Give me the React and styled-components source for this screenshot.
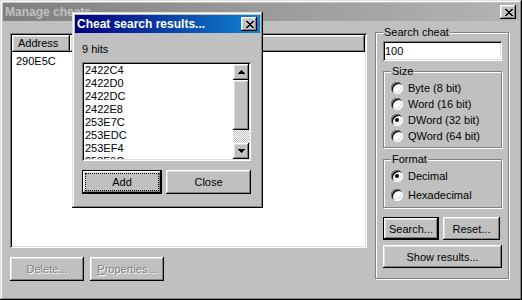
import React from 'react'
import styled, { createGlobalStyle, css } from 'styled-components'

const GlobalStyle = createGlobalStyle`
  body {
    margin: 0;
    background: #c0c0c0;
    font-family: 'Liberation Sans', Arial, sans-serif;
    font-size: 11px;
    color: #000;
  }
`

const raised = css`
  box-shadow: inset -1px -1px #000, inset 1px 1px #fff, inset -2px -2px #808080,
    inset 2px 2px #dfdfdf;
`

const sunken = css`
  box-shadow: inset 1px 1px #808080, inset -1px -1px #fff, inset 2px 2px #000,
    inset -2px -2px #dfdfdf;
`

const Window = styled.div`
  position: relative;
  box-sizing: border-box;
  width: ${(p) => p.$w}px;
  height: ${(p) => p.$h}px;
  padding: 3px;
  background: #c0c0c0;
  display: flex;
  flex-direction: column;
  box-shadow: inset -1px -1px #000, inset 1px 1px #dfdfdf, inset -2px -2px #808080,
    inset 2px 2px #fff;
`

const Dialog = styled(Window)`
  position: absolute;
  left: 72px;
  top: 12px;
`

const TitleBar = styled.div`
  flex: none;
  height: 18px;
  display: flex;
  align-items: center;
  padding-left: 2px;
  font-size: 12px;
  font-weight: bold;
  background: ${(p) =>
    p.$active
      ? 'linear-gradient(90deg, #000080, #1084d0)'
      : 'linear-gradient(90deg, #808080, #b4b4b4)'};
  color: ${(p) => (p.$active ? '#fff' : '#c0c0c0')};
`

const TitleText = styled.span`
  flex: 1;
  white-space: nowrap;
  overflow: hidden;
`

const CloseButton = styled.button`
  width: 16px;
  height: 14px;
  margin-right: 3px;
  padding: 0 0 0 1px;
  border: none;
  background: #c0c0c0;
  display: grid;
  place-items: center;
  ${raised}
`

const Body = styled.div`
  flex: 1;
  display: grid;
  grid-template-columns: 357px 134px;
  column-gap: 8px;
  align-items: start;
  padding: 5px 0 0 7px;
`

const LeftColumn = styled.div`
  display: flex;
  flex-direction: column;
  padding-top: 7px;
`

const ListView = styled.div`
  box-sizing: border-box;
  height: 215px;
  padding: 2px;
  background: #fff;
  display: flex;
  flex-direction: column;
  ${sunken}
`

const Header = styled.div`
  display: flex;
  height: 17px;
`

const HeaderCell = styled.div`
  box-sizing: border-box;
  width: ${(p) => (p.$w ? `${p.$w}px` : 'auto')};
  flex: ${(p) => (p.$w ? 'none' : '1')};
  padding-left: 6px;
  line-height: 17px;
  background: #c0c0c0;
  ${raised}
`

const ListRow = styled.div`
  padding: 3px 0 0 4px;
  line-height: 13px;
`

const ButtonRow = styled.div`
  display: flex;
  gap: ${(p) => p.$gap}px;
  margin-top: ${(p) => p.$mt}px;
`

const Button = styled.button`
  box-sizing: border-box;
  width: ${(p) => p.$w}px;
  height: ${(p) => p.$h || 23}px;
  padding: 0;
  border: none;
  background: #c0c0c0;
  font-family: 'Liberation Sans', Arial, sans-serif;
  font-size: 11px;
  color: #000;
  ${raised}
  ${(p) =>
    p.$default &&
    css`
      box-shadow: inset 0 0 0 1px #000, inset -2px -2px #000, inset 2px 2px #fff,
        inset -3px -3px #808080, inset 3px 3px #dfdfdf;
    `}
  ${(p) =>
    p.$focused &&
    css`
      outline: 1px dotted #000;
      outline-offset: -4px;
    `}
  &:disabled {
    color: #808080;
    text-shadow: 1px 1px #fff;
  }
`

const GroupBox = styled.fieldset`
  box-sizing: border-box;
  min-width: 0;
  margin: ${(p) => p.$mt || 0}px 0 0;
  padding: ${(p) => p.$pad};
  height: ${(p) => (p.$h ? `${p.$h}px` : 'auto')};
  border: 1px solid #808080;
  box-shadow: inset 1px 1px #fff, 1px 1px #fff;
  display: flex;
  flex-direction: column;
`

const Legend = styled.legend`
  padding: 0 1px;
  line-height: 13px;
  background: #c0c0c0;
`

const TextField = styled.input`
  box-sizing: border-box;
  width: 100%;
  height: 20px;
  padding: 0 2px;
  border: none;
  outline: none;
  background: #fff;
  font-family: 'Liberation Sans', Arial, sans-serif;
  font-size: 11px;
  color: #000;
  ${sunken}
`

const RadioRow = styled.label`
  display: flex;
  align-items: center;
  gap: 5px;
  height: ${(p) => p.$h}px;
`

const Radio = styled.span`
  flex: none;
  width: 12px;
  height: 12px;
  border-radius: 50%;
  background: #fff;
  display: grid;
  place-items: center;
  box-shadow: inset 1px 1px #808080, inset -1px -1px #fff, inset 2px 2px #000,
    inset -2px -2px #dfdfdf;
  &::after {
    content: '';
    width: 4px;
    height: 4px;
    border-radius: 50%;
    background: ${(p) => (p.$checked ? '#000' : 'transparent')};
  }
`

const DialogBody = styled.div`
  display: flex;
  flex-direction: column;
  padding: 10px 9px 0 7px;
`

const Caption = styled.div`
  line-height: 13px;
`

const ListBox = styled.div`
  box-sizing: border-box;
  height: 99px;
  margin-top: 6px;
  padding: 2px;
  background: #fff;
  display: flex;
  ${sunken}
`

const Items = styled.div`
  flex: 1;
  overflow: hidden;
  padding-left: 1px;
  line-height: 13px;
`

const ScrollBar = styled.div`
  width: 16px;
  flex: none;
  display: flex;
  flex-direction: column;
`

const ScrollButton = styled.div`
  height: 16px;
  flex: none;
  background: #c0c0c0;
  display: grid;
  place-items: center;
  ${raised}
`

const Thumb = styled.div`
  height: 50px;
  flex: none;
  background: #c0c0c0;
  ${raised}
`

const Track = styled.div`
  flex: 1;
  background-image: conic-gradient(#c0c0c0 25%, #fff 0 50%, #c0c0c0 0 75%, #fff 0);
  background-size: 2px 2px;
`

const CloseGlyph = () => (
  <svg width="8" height="7" viewBox="0 0 8 7" shapeRendering="crispEdges">
    <path
      fill="#000"
      d="M0 0h2v1H0zM6 0h2v1H6zM1 1h2v1H1zM5 1h2v1H5zM2 2h4v1H2zM3 3h2v1H3zM2 4h4v1H2zM1 5h2v1H1zM5 5h2v1H5zM0 6h2v1H0zM6 6h2v1H6z"
    />
  </svg>
)

const Arrow = ({ down }) => (
  <svg width="7" height="4" viewBox="0 0 7 4" shapeRendering="crispEdges">
    <path
      fill="#000"
      d={
        down
          ? 'M0 0h7v1H6v1H5v1H4v1H3V3H2V2H1V1H0z'
          : 'M3 0h1v1h1v1h1v1h1v1H0V3h1V2h1V1h1z'
      }
    />
  </svg>
)

const hits = ['2422C4', '2422D0', '2422DC', '2422E8', '253E7C', '253EDC', '253EF4', '253F0C', '253F18']

const sizes = [
  { label: 'Byte (8 bit)' },
  { label: 'Word (16 bit)' },
  { label: 'DWord (32 bit)', checked: true },
  { label: 'QWord (64 bit)' },
]

const App = () => {
  return (
    <>
      <GlobalStyle />
      <Window $w={522} $h={300}>
        <TitleBar>
          <TitleText>Manage cheats</TitleText>
          <CloseButton>
            <CloseGlyph />
          </CloseButton>
        </TitleBar>
        <Body>
          <LeftColumn>
            <ListView>
              <Header>
                <HeaderCell $w={58}>Address</HeaderCell>
                <HeaderCell />
              </Header>
              <ListRow>290E5C</ListRow>
            </ListView>
            <ButtonRow $gap={6} $mt={9}>
              <Button $w={74} $h={24} disabled>
                Delete...
              </Button>
              <Button $w={74} $h={24} disabled>
                <u>P</u>roperties...
              </Button>
            </ButtonRow>
          </LeftColumn>

          <GroupBox $h={253} $pad="2px 6px 0 7px">
            <Legend>Search cheat</Legend>
            <TextField defaultValue="100" />
            <GroupBox $mt={4} $pad="2px 6px 3px 7px">
              <Legend>Size</Legend>
              {sizes.map((s) => (
                <RadioRow key={s.label} $h={16}>
                  <Radio $checked={s.checked} />
                  {s.label}
                </RadioRow>
              ))}
            </GroupBox>
            <GroupBox $mt={5} $pad="0 6px 3px 7px">
              <Legend>Format</Legend>
              <RadioRow $h={19}>
                <Radio $checked />
                Decimal
              </RadioRow>
              <RadioRow $h={19}>
                <Radio />
                Hexadecimal
              </RadioRow>
            </GroupBox>
            <ButtonRow $gap={4} $mt={9}>
              <Button $w={56} $default>
                Search...
              </Button>
              <Button $w={57}>Reset...</Button>
            </ButtonRow>
            <ButtonRow $gap={0} $mt={5}>
              <Button $w={119}>Show results...</Button>
            </ButtonRow>
          </GroupBox>
        </Body>

        <Dialog $w={191} $h={196}>
          <TitleBar $active>
            <TitleText>Cheat search results...</TitleText>
            <CloseButton>
              <CloseGlyph />
            </CloseButton>
          </TitleBar>
          <DialogBody>
            <Caption>9 hits</Caption>
            <ListBox>
              <Items>
                {hits.map((h) => (
                  <div key={h}>{h}</div>
                ))}
              </Items>
              <ScrollBar>
                <ScrollButton>
                  <Arrow />
                </ScrollButton>
                <Thumb />
                <Track />
                <ScrollButton>
                  <Arrow down />
                </ScrollButton>
              </ScrollBar>
            </ListBox>
            <ButtonRow $gap={4} $mt={9}>
              <Button $w={80} $h={24} $default $focused>
                Add
              </Button>
              <Button $w={85} $h={24}>
                Close
              </Button>
            </ButtonRow>
          </DialogBody>
        </Dialog>
      </Window>
    </>
  )
}

export default App
